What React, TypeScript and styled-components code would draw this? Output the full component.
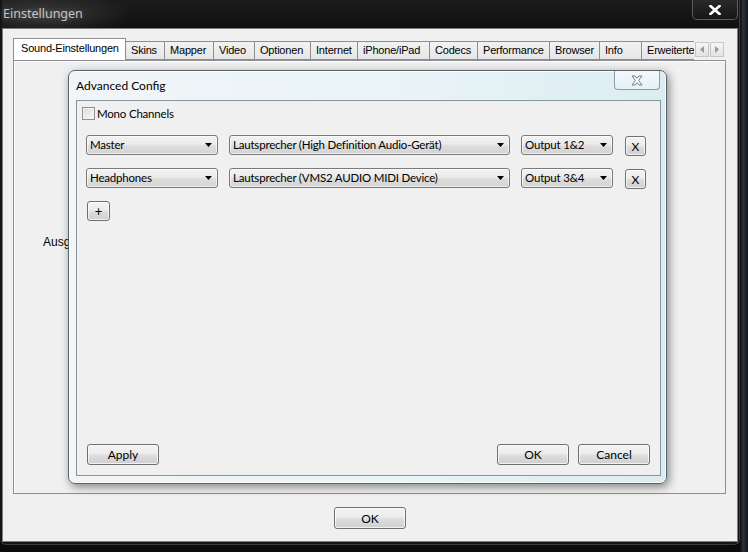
import * as React from "react";
import styled, { createGlobalStyle } from "styled-components";

const GlobalStyle = createGlobalStyle`
  html, body {
    margin: 0;
    padding: 0;
    background: #0b0b0b;
  }
  body {
    font-family: Lato, "Liberation Sans", sans-serif;
    font-size: 12px;
    color: #000;
  }
`;

const Desktop = styled.div`
  position: relative;
  width: 748px;
  height: 552px;
  overflow: hidden;
  background: linear-gradient(90deg, #0b0b0b 0, #0b0b0b 740px, #2b323a 743px, #11161c 748px);
`;

const Window = styled.div`
  width: 740px;
  height: 545px;
  display: flex;
  flex-direction: column;
  box-sizing: border-box;
  padding: 0 1px 2px 2px;
  background: #151515;
  border-right: 1px solid #3a3a3a;
  border-bottom: 1px solid #3a3a3a;
  border-radius: 0 0 6px 6px;
`;

const TitleBar = styled.div`
  height: 28px;
  flex: none;
  display: flex;
  align-items: flex-start;
  position: relative;
  background: radial-gradient(ellipse 90px 22px at 40px 14px, #3a3a3a, transparent),
    linear-gradient(#1c1c1c, #101010);
`;

const Title = styled.span`
  margin: 5px 0 0 1px;
  font-family: "Noto Sans", sans-serif;
  font-size: 12.5px;
  color: #c4c4c4;
  text-shadow: 0 0 6px rgba(255, 255, 255, 0.25);
`;

const WinClose = styled.div`
  position: absolute;
  right: 0;
  top: 0;
  width: 46px;
  height: 20px;
  box-sizing: border-box;
  border: 1px solid #5c5c5c;
  border-top: none;
  border-radius: 0 0 5px 5px;
  background: linear-gradient(#2a2a2a, #161616);
  display: flex;
  align-items: center;
  justify-content: center;
`;

const Client = styled.div`
  flex: 1;
  display: flex;
  flex-direction: column;
  box-sizing: border-box;
  border: 1px solid #7e7e7e;
  background: #f0f0f0;
  padding: 9px 0 0 10px;
`;

const TabControl = styled.div`
  width: 713px;
  display: flex;
  flex-direction: column;
`;

const TabStrip = styled.div`
  height: 22px;
  display: flex;
  align-items: flex-end;
`;

const Tabs = styled.div`
  flex: 1;
  display: flex;
  align-items: flex-end;
  overflow: hidden;
  height: 22px;
`;

const Tab = styled.div<{ $w: number; $active?: boolean }>`
  flex: none;
  width: ${(p) => p.$w}px;
  height: ${(p) => (p.$active ? 22 : 19)}px;
  box-sizing: border-box;
  border: 1px solid #8c8e94;
  border-bottom: ${(p) => (p.$active ? "none" : "1px solid #8c8e94")};
  margin-left: -1px;
  padding: ${(p) => (p.$active ? "3px 0 0 7px" : "2px 0 0 5px")};
  background: ${(p) => (p.$active ? "#ffffff" : "linear-gradient(#f2f2f2, #e6e6e6)")};
  font-family: "Liberation Sans", Arial, sans-serif;
  font-size: 11px;
  letter-spacing: -0.2px;
  white-space: nowrap;
  overflow: hidden;
  position: relative;
  z-index: ${(p) => (p.$active ? 1 : 0)};
  &:first-child {
    margin-left: 0;
  }
`;

const Arrows = styled.div`
  flex: none;
  display: flex;
  margin: 0 2px 3px 0;
`;

const ArrowBtn = styled.div`
  width: 14px;
  height: 15px;
  box-sizing: border-box;
  border: 1px solid #c6c6c6;
  background: linear-gradient(#f6f6f6, #e2e2e2);
  display: flex;
  align-items: center;
  justify-content: center;
  margin-left: 1px;
`;

const Panel = styled.div`
  height: 434px;
  box-sizing: border-box;
  border: 1px solid #8c8e94;
  background: #f0f0f0;
  box-shadow: inset 1px 1px 0 #ffffff;
  position: relative;
  padding: 174px 0 0 29px;
`;

const PanelLabel = styled.div`
  font-family: "Liberation Sans", Arial, sans-serif;
  font-size: 12px;
`;

const Footer = styled.div`
  display: flex;
  justify-content: center;
  padding: 13px 10px 0 0;
`;

const Button = styled.button<{ $w?: number; $h?: number }>`
  width: ${(p) => p.$w ?? 72}px;
  height: ${(p) => p.$h ?? 21}px;
  box-sizing: border-box;
  border: 1px solid #707070;
  border-radius: 3px;
  background: linear-gradient(#f4f4f4 0%, #ececec 45%, #dddddd 55%, #cfcfcf 100%);
  box-shadow: inset 0 0 0 1px rgba(255, 255, 255, 0.7);
  font-family: Lato, sans-serif;
  font-size: 12px;
  color: #000;
  padding: 0;
  display: flex;
  align-items: center;
  justify-content: center;
`;

const Dialog = styled.div`
  position: absolute;
  left: 68px;
  top: 70px;
  width: 599px;
  height: 414px;
  box-sizing: border-box;
  border: 1px solid #59636b;
  border-radius: 7px;
  background: linear-gradient(90deg, #f2f5f7 0%, #e9f4f7 55%, #dcedf2 100%);
  box-shadow: inset 0 0 0 1px rgba(255, 255, 255, 0.85), 2px 3px 10px rgba(0, 0, 0, 0.45);
  display: flex;
  flex-direction: column;
  padding: 0 5px 7px 7px;
`;

const DialogTitle = styled.div`
  height: 29px;
  flex: none;
  display: flex;
  align-items: center;
  font-family: Lato, sans-serif;
  font-size: 12px;
  box-sizing: border-box;
`;

const DialogClose = styled.div`
  position: absolute;
  right: 6px;
  top: 0;
  width: 46px;
  height: 19px;
  box-sizing: border-box;
  border: 1px solid #8d9ba6;
  border-top: none;
  border-radius: 0 0 4px 4px;
  background: linear-gradient(#f3f8fa, #e6f1f5);
  display: flex;
  align-items: center;
  justify-content: center;
`;

const DialogBody = styled.div`
  flex: 1;
  display: flex;
  flex-direction: column;
  box-sizing: border-box;
  border: 1px solid #87939c;
  background: #f0f0f0;
  padding: 5px 10px 10px 5px;
`;

const CheckRow = styled.label`
  display: flex;
  align-items: center;
  gap: 2px;
  font-family: Lato, sans-serif;
  font-size: 11.5px;
  letter-spacing: -0.2px;
  height: 14px;
`;

const CheckBox = styled.span`
  width: 13px;
  height: 13px;
  box-sizing: border-box;
  border: 1px solid #8f8f8f;
  background: linear-gradient(135deg, #dcdcdc, #f8f8f8);
  box-shadow: inset 0 0 0 1px #f4f4f4;
`;

const Rows = styled.div`
  display: flex;
  flex-direction: column;
  gap: 13px;
  margin: 15px 0 0 4px;
`;

const Row = styled.div`
  display: flex;
  align-items: flex-start;
  height: 20px;
`;

const Combo = styled.div<{ $w: number; $gap?: number }>`
  width: ${(p) => p.$w}px;
  height: 20px;
  margin-right: ${(p) => p.$gap ?? 11}px;
  box-sizing: border-box;
  border: 1px solid #7a7a7a;
  border-radius: 3px;
  background: linear-gradient(#f2f2f2 0%, #ebebeb 45%, #dddddd 55%, #d3d3d3 100%);
  box-shadow: inset 0 0 0 1px rgba(255, 255, 255, 0.6);
  display: flex;
  align-items: center;
  padding: 0 5px 1px 3px;
  font-family: Lato, sans-serif;
  font-size: 11.5px;
  letter-spacing: -0.2px;
  white-space: nowrap;
`;

const ComboText = styled.span`
  flex: 1;
  overflow: hidden;
`;

const RemoveButton = styled(Button)`
  margin-top: 1px;
`;

const AddButton = styled(Button)`
  margin: 13px 0 0 5px;
  font-size: 13px;
`;

const ButtonBar = styled.div`
  margin-top: auto;
  display: flex;
  align-items: center;
  padding-left: 5px;
  gap: 9px;
`;

const Spacer = styled.div`
  flex: 1;
`;

const DropArrow = () => (
  <svg width="7" height="4" viewBox="0 0 7 4">
    <path d="M0 0H7L3.5 4Z" fill="#000" />
  </svg>
);

const tabs: [string, number][] = [
  ["Sound-Einstellungen", 113],
  ["Skins", 40],
  ["Mapper", 50],
  ["Video", 42],
  ["Optionen", 57],
  ["Internet", 48],
  ["iPhone/iPad", 73],
  ["Codecs", 49],
  ["Performance", 73],
  ["Browser", 51],
  ["Info", 43],
  ["Erweiterte", 70],
];

const routes = [
  { ch: "Master", dev: "Lautsprecher (High Definition Audio-Gerät)", out: "Output 1&2" },
  { ch: "Headphones", dev: "Lautsprecher (VMS2 AUDIO MIDI Device)", out: "Output 3&4" },
];

export default function App() {
  return (
    <Desktop>
      <GlobalStyle />
      <Window>
        <TitleBar>
          <Title>Einstellungen</Title>
          <WinClose>
            <svg width="12" height="10" viewBox="0 0 12 10">
              <path d="M1.5 1L10.5 9M10.5 1L1.5 9" stroke="#fff" strokeWidth="2.6" strokeLinecap="square" />
            </svg>
          </WinClose>
        </TitleBar>
        <Client>
          <TabControl>
            <TabStrip>
              <Tabs>
                {tabs.map(([name, w], i) => (
                  <Tab key={name} $w={w} $active={i === 0}>
                    {name}
                  </Tab>
                ))}
              </Tabs>
              <Arrows>
                <ArrowBtn>
                  <svg width="4" height="7" viewBox="0 0 4 7">
                    <path d="M4 0V7L0 3.5Z" fill="#9a9a9a" />
                  </svg>
                </ArrowBtn>
                <ArrowBtn>
                  <svg width="4" height="7" viewBox="0 0 4 7">
                    <path d="M0 0V7L4 3.5Z" fill="#9a9a9a" />
                  </svg>
                </ArrowBtn>
              </Arrows>
            </TabStrip>
            <Panel>
              <PanelLabel>Ausgabe-Konfiguration</PanelLabel>
            </Panel>
          </TabControl>
          <Footer>
            <Button $h={22}>OK</Button>
          </Footer>
        </Client>
      </Window>

      <Dialog>
        <DialogTitle>Advanced Config</DialogTitle>
        <DialogClose>
          <svg width="14" height="11" viewBox="0 0 14 11">
            <path
              d="M2 1H5L7 3.4L9 1H12L8.6 5.5L12 10H9L7 7.6L5 10H2L5.4 5.5Z"
              fill="#ffffff"
              stroke="#6f7b84"
              strokeWidth="1"
              strokeLinejoin="round"
            />
          </svg>
        </DialogClose>
        <DialogBody>
          <CheckRow>
            <CheckBox />
            Mono Channels
          </CheckRow>
          <Rows>
            {routes.map((r) => (
              <Row key={r.ch}>
                <Combo $w={132}>
                  <ComboText>{r.ch}</ComboText>
                  <DropArrow />
                </Combo>
                <Combo $w={281}>
                  <ComboText>{r.dev}</ComboText>
                  <DropArrow />
                </Combo>
                <Combo $w={92} $gap={12}>
                  <ComboText>{r.out}</ComboText>
                  <DropArrow />
                </Combo>
                <RemoveButton $w={21} $h={20}>
                  X
                </RemoveButton>
              </Row>
            ))}
          </Rows>
          <AddButton $w={23} $h={20}>
            +
          </AddButton>
          <ButtonBar>
            <Button>Apply</Button>
            <Spacer />
            <Button>OK</Button>
            <Button>Cancel</Button>
          </ButtonBar>
        </DialogBody>
      </Dialog>
    </Desktop>
  );
}
